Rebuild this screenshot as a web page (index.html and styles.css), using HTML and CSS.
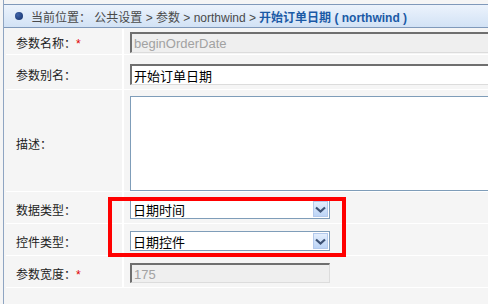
FILE: index.html
```html
<!DOCTYPE html>
<html lang="zh-CN">
<head>
    <meta charset="UTF-8">
    <title>参数编辑</title>
    <link rel="stylesheet" href="styles.css">
</head>
<body>
    <div class="page">
        <!-- 位置导航 -->
        <div class="crumb">
            <span class="dot"></span>
            <span class="crumb-text">当前位置： 公共设置 &gt; 参数 &gt; northwind &gt; </span>
            <span class="crumb-cur">开始订单日期 (&nbsp;northwind&nbsp;)</span>
        </div>

        <table class="form-table">
            <tr class="row-1">
                <td class="lbl">参数名称：<span class="req">*</span></td>
                <td class="val"><div class="clip"><input type="text" class="txt txt-wide" value="beginOrderDate" disabled></div></td>
            </tr>
            <tr class="row-2">
                <td class="lbl">参数别名：</td>
                <td class="val"><div class="clip"><input type="text" class="txt txt-wide txt-edit" value="开始订单日期"></div></td>
            </tr>
            <tr class="row-3">
                <td class="lbl">描述：</td>
                <td class="val"><div class="clip"><textarea class="desc"></textarea></div></td>
            </tr>
            <tr class="row-4">
                <td class="lbl">数据类型：</td>
                <td class="val">
                    <div class="combo"><span>日期时间</span><span class="combo-btn"><svg width="11" height="7" viewBox="0 0 11 7"><path d="M1 1.5 L5.5 5.5 L10 1.5" fill="none" stroke="#3d5275" stroke-width="2.2"/></svg></span></div>
                </td>
            </tr>
            <tr class="row-5">
                <td class="lbl">控件类型：</td>
                <td class="val">
                    <div class="combo"><span>日期控件</span><span class="combo-btn"><svg width="11" height="7" viewBox="0 0 11 7"><path d="M1 1.5 L5.5 5.5 L10 1.5" fill="none" stroke="#3d5275" stroke-width="2.2"/></svg></span></div>
                </td>
            </tr>
            <tr class="row-6">
                <td class="lbl">参数宽度：<span class="req">*</span></td>
                <td class="val"><input type="text" class="txt txt-short" value="175" disabled></td>
            </tr>
        </table>
    </div>

    <!-- 标注框 -->
    <div class="mark"></div>
</body>
</html>
```

FILE: styles.css
```css
html, body {
    margin: 0;
    padding: 0;
    height: 100%;
}
body {
    background-color: #f5f5f5;
    font-family: "Liberation Sans", "Noto Sans CJK SC", sans-serif;
    font-size: 12px;
    color: #222;
    overflow: hidden;
    position: relative;
}
.page {
    margin-left: 3px;
    height: 100%;
    border-left: 1px solid #8fa5c2;
    padding-top: 4px;
    box-sizing: border-box;
}
.crumb {
    height: 22px;
    border-top: 1px solid #8099ba;
    border-bottom: 1px solid #8099ba;
    background: linear-gradient(#ecf3fc, #d2e2f5);
    display: flex;
    align-items: center;
    padding-left: 11px;
    white-space: nowrap;
    overflow: hidden;
}
.dot {
    width: 8px;
    height: 8px;
    border-radius: 50%;
    background: radial-gradient(circle at 35% 35%, #3f63a8, #14306a);
    margin-right: 8px;
}
.crumb-text {
    color: #4a4a4a;
}
.crumb-cur {
    color: #1b5aa6;
    font-weight: bold;
    margin-left: 3px;
}
.form-table {
    border-collapse: collapse;
    table-layout: fixed;
    margin-left: 2px;
    margin-top: 1px;
    width: calc(100% - 2px);
}
.form-table td {
    background-color: #f5f5f5;
    border-bottom: 1px solid #fff;
    padding: 3px 0 0 0;
    vertical-align: middle;
}
.lbl {
    width: 106px;
    padding-left: 10px !important;
    border-right: 2px solid #fff;
    white-space: nowrap;
}
.val {
    padding-left: 6px !important;
}
.clip {
    overflow: hidden;
}
.req {
    color: #e00000;
}
.row-1 td { height: 23px; padding-top: 2px; }
.row-2 td { height: 29px; padding-top: 5px; }
.row-3 td { height: 96px; padding-top: 5px; }
.row-4 td, .row-5 td, .row-6 td { height: 28px; }

.txt {
    display: block;
    box-sizing: border-box;
    height: 21px;
    margin: 0;
    padding: 1px 2px 0;
    font-family: "Liberation Sans", "Noto Sans CJK SC", sans-serif;
    font-size: 13px;
    border: 1px solid;
    border-color: #6f6f6f #dcdcdc #dcdcdc #6f6f6f;
    border-top-width: 2px;
    border-left-width: 2px;
    outline: none;
}
.txt[disabled] {
    background-color: #efefef;
    color: #a2a2a2;
}
.txt-wide {
    width: 420px;
}
.txt-edit {
    background-color: #fff;
    color: #000;
}
.txt-short {
    width: 200px;
    height: 20px;
}
.desc {
    display: block;
    box-sizing: border-box;
    width: 420px;
    height: 95px;
    margin: 0;
    border: 1px solid #7f9db9;
    background-color: #fff;
    resize: none;
}
.combo {
    width: 200px;
    height: 20px;
    box-sizing: border-box;
    border: 1px solid #7f9db9;
    background-color: #fff;
    display: flex;
    align-items: center;
    justify-content: space-between;
    padding: 0 1px 0 2px;
    font-size: 13px;
    color: #000;
}
.combo-btn {
    width: 15px;
    height: 16px;
    box-sizing: border-box;
    border: 1px solid #b3c9ec;
    background: linear-gradient(#e3eefd, #bcd4f6);
    display: flex;
    align-items: center;
    justify-content: center;
}
.mark {
    position: absolute;
    left: 108px;
    top: 197px;
    width: 238px;
    height: 60px;
    box-sizing: border-box;
    border: 4px solid #ff0000;
}
```
